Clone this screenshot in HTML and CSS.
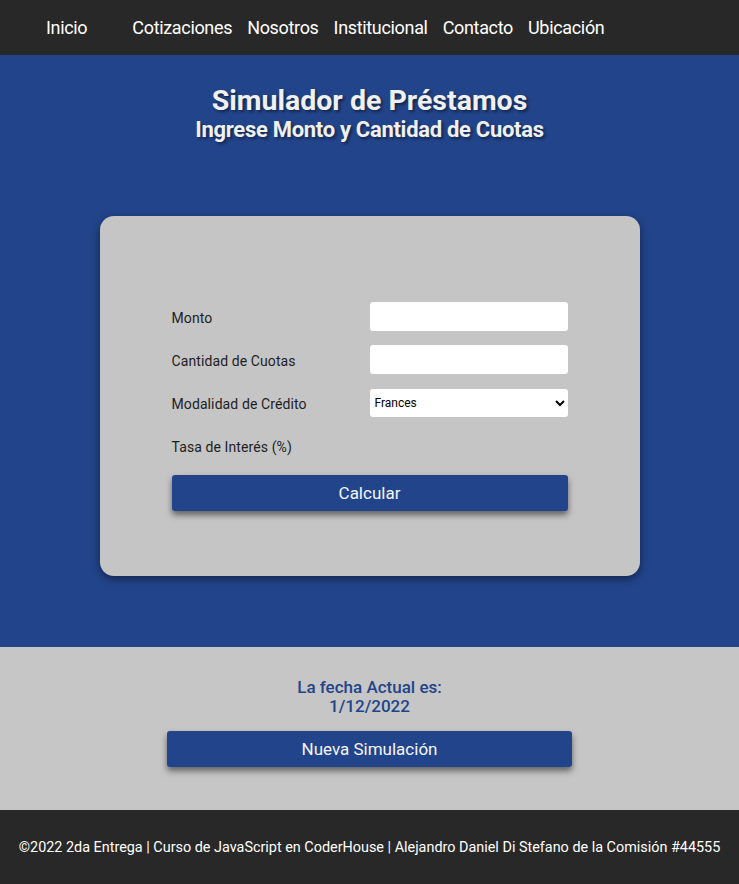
FILE: index.html
```html
<!DOCTYPE html>
<html lang="es">
<head>
<meta charset="utf-8">
<title>Simulador de Préstamos</title>
<link rel="stylesheet" href="styles.css">
</head>
<body>
<nav class="nav">
  <a class="nav-link nav-first" href="#">Inicio</a>
  <a class="nav-link" href="#">Cotizaciones</a>
  <a class="nav-link" href="#">Nosotros</a>
  <a class="nav-link" href="#">Institucional</a>
  <a class="nav-link" href="#">Contacto</a>
  <a class="nav-link" href="#">Ubicación</a>
</nav>
<main class="hero">
  <h1 class="title">Simulador de Préstamos</h1>
  <h2 class="subtitle">Ingrese Monto y Cantidad de Cuotas</h2>
  <section class="card">
    <form class="form">
      <label class="label" for="monto">Monto</label>
      <input class="field" id="monto" type="text">
      <label class="label" for="cuotas">Cantidad de Cuotas</label>
      <input class="field" id="cuotas" type="text">
      <label class="label" for="modo">Modalidad de Crédito</label>
      <select class="field select" id="modo"><option>Frances</option><option>Aleman</option></select>
      <span class="label">Tasa de Interés (%)</span>
      <span></span>
      <button class="btn btn-calc" type="button">Calcular</button>
    </form>
  </section>
</main>
<section class="date-section">
  <p class="date-text">La fecha Actual es:<br>1/12/2022</p>
  <button class="btn btn-new" type="button">Nueva Simulación</button>
</section>
<footer class="footer">
  <p class="footer-text">©2022 2da Entrega | Curso de JavaScript en CoderHouse | Alejandro Daniel Di Stefano de la Comisión #44555</p>
</footer>
</body>
</html>
```
FILE: styles.css
```css
* { box-sizing: border-box; }
body {
  margin: 0;
  font-family: Roboto, "Liberation Sans", sans-serif;
  background: #282828;
}
.nav {
  height: 55px;
  background: #282828;
  display: flex;
  align-items: center;
  padding-left: 46px;
  gap: 15px;
}
.nav-link {
  color: #ffffff;
  text-decoration: none;
  font-size: 18px;
  letter-spacing: -0.33px;
}
.nav-first { margin-right: 30px; }
.hero {
  background: #22448a;
  padding: 29px 0 71px;
  display: flex;
  flex-direction: column;
  align-items: center;
}
.title {
  margin: 0;
  color: #f0f0f0;
  font-size: 28.5px;
  font-weight: 700;
  line-height: 33px;
  text-shadow: 2px 2px 3px rgba(0,0,0,0.45);
}
.subtitle {
  margin: 0;
  color: #f0f0f0;
  font-size: 22px;
  font-weight: 700;
  line-height: 26px;
  letter-spacing: -0.3px;
  text-shadow: 2px 2px 3px rgba(0,0,0,0.45);
}
.card {
  margin-top: 73px;
  width: 540px;
  height: 360px;
  background: #c5c5c5;
  border-radius: 14px;
  box-shadow: 0 3px 8px rgba(0,0,0,0.45);
  padding: 86px 71px 0 72px;
}
.form {
  display: grid;
  grid-template-columns: 198px 198px;
  grid-auto-rows: 29px;
  row-gap: 14px;
  align-items: center;
}
.label {
  font-size: 14px;
  letter-spacing: 0.1px;
  color: #1e1e1e;
  padding-top: 3px;
}
.field {
  height: 29px;
  width: 198px;
  border: none;
  border-radius: 3px;
  background: #ffffff;
  font-family: Roboto, "Liberation Sans", sans-serif;
  font-size: 12px;
  padding: 0 1px;
}
.select { height: 28px; color: #000; }
.btn {
  background: #22448a;
  color: #f5f5f5;
  border: none;
  border-radius: 3px;
  font-family: Roboto, "Liberation Sans", sans-serif;
  font-size: 17px;
  box-shadow: 0 4px 6px rgba(0,0,0,0.5);
  cursor: pointer;
}
.btn-calc {
  grid-column: 1 / 3;
  height: 36px;
  margin-top: 1px;
  align-self: start;
}
.date-section {
  background: #c6c6c6;
  height: 163px;
  display: flex;
  flex-direction: column;
  align-items: center;
  padding-top: 31px;
}
.date-text {
  margin: 0;
  color: #22448a;
  font-size: 17px;
  line-height: 19px;
  text-align: center;
  font-weight: 500;
}
.btn-new {
  margin-top: 15px;
  width: 405px;
  height: 36px;
}
.footer {
  height: 74px;
  background: #282828;
  display: flex;
  align-items: center;
  justify-content: center;
}
.footer-text {
  margin: 0;
  color: #ffffff;
  font-size: 14.4px;
}
```
